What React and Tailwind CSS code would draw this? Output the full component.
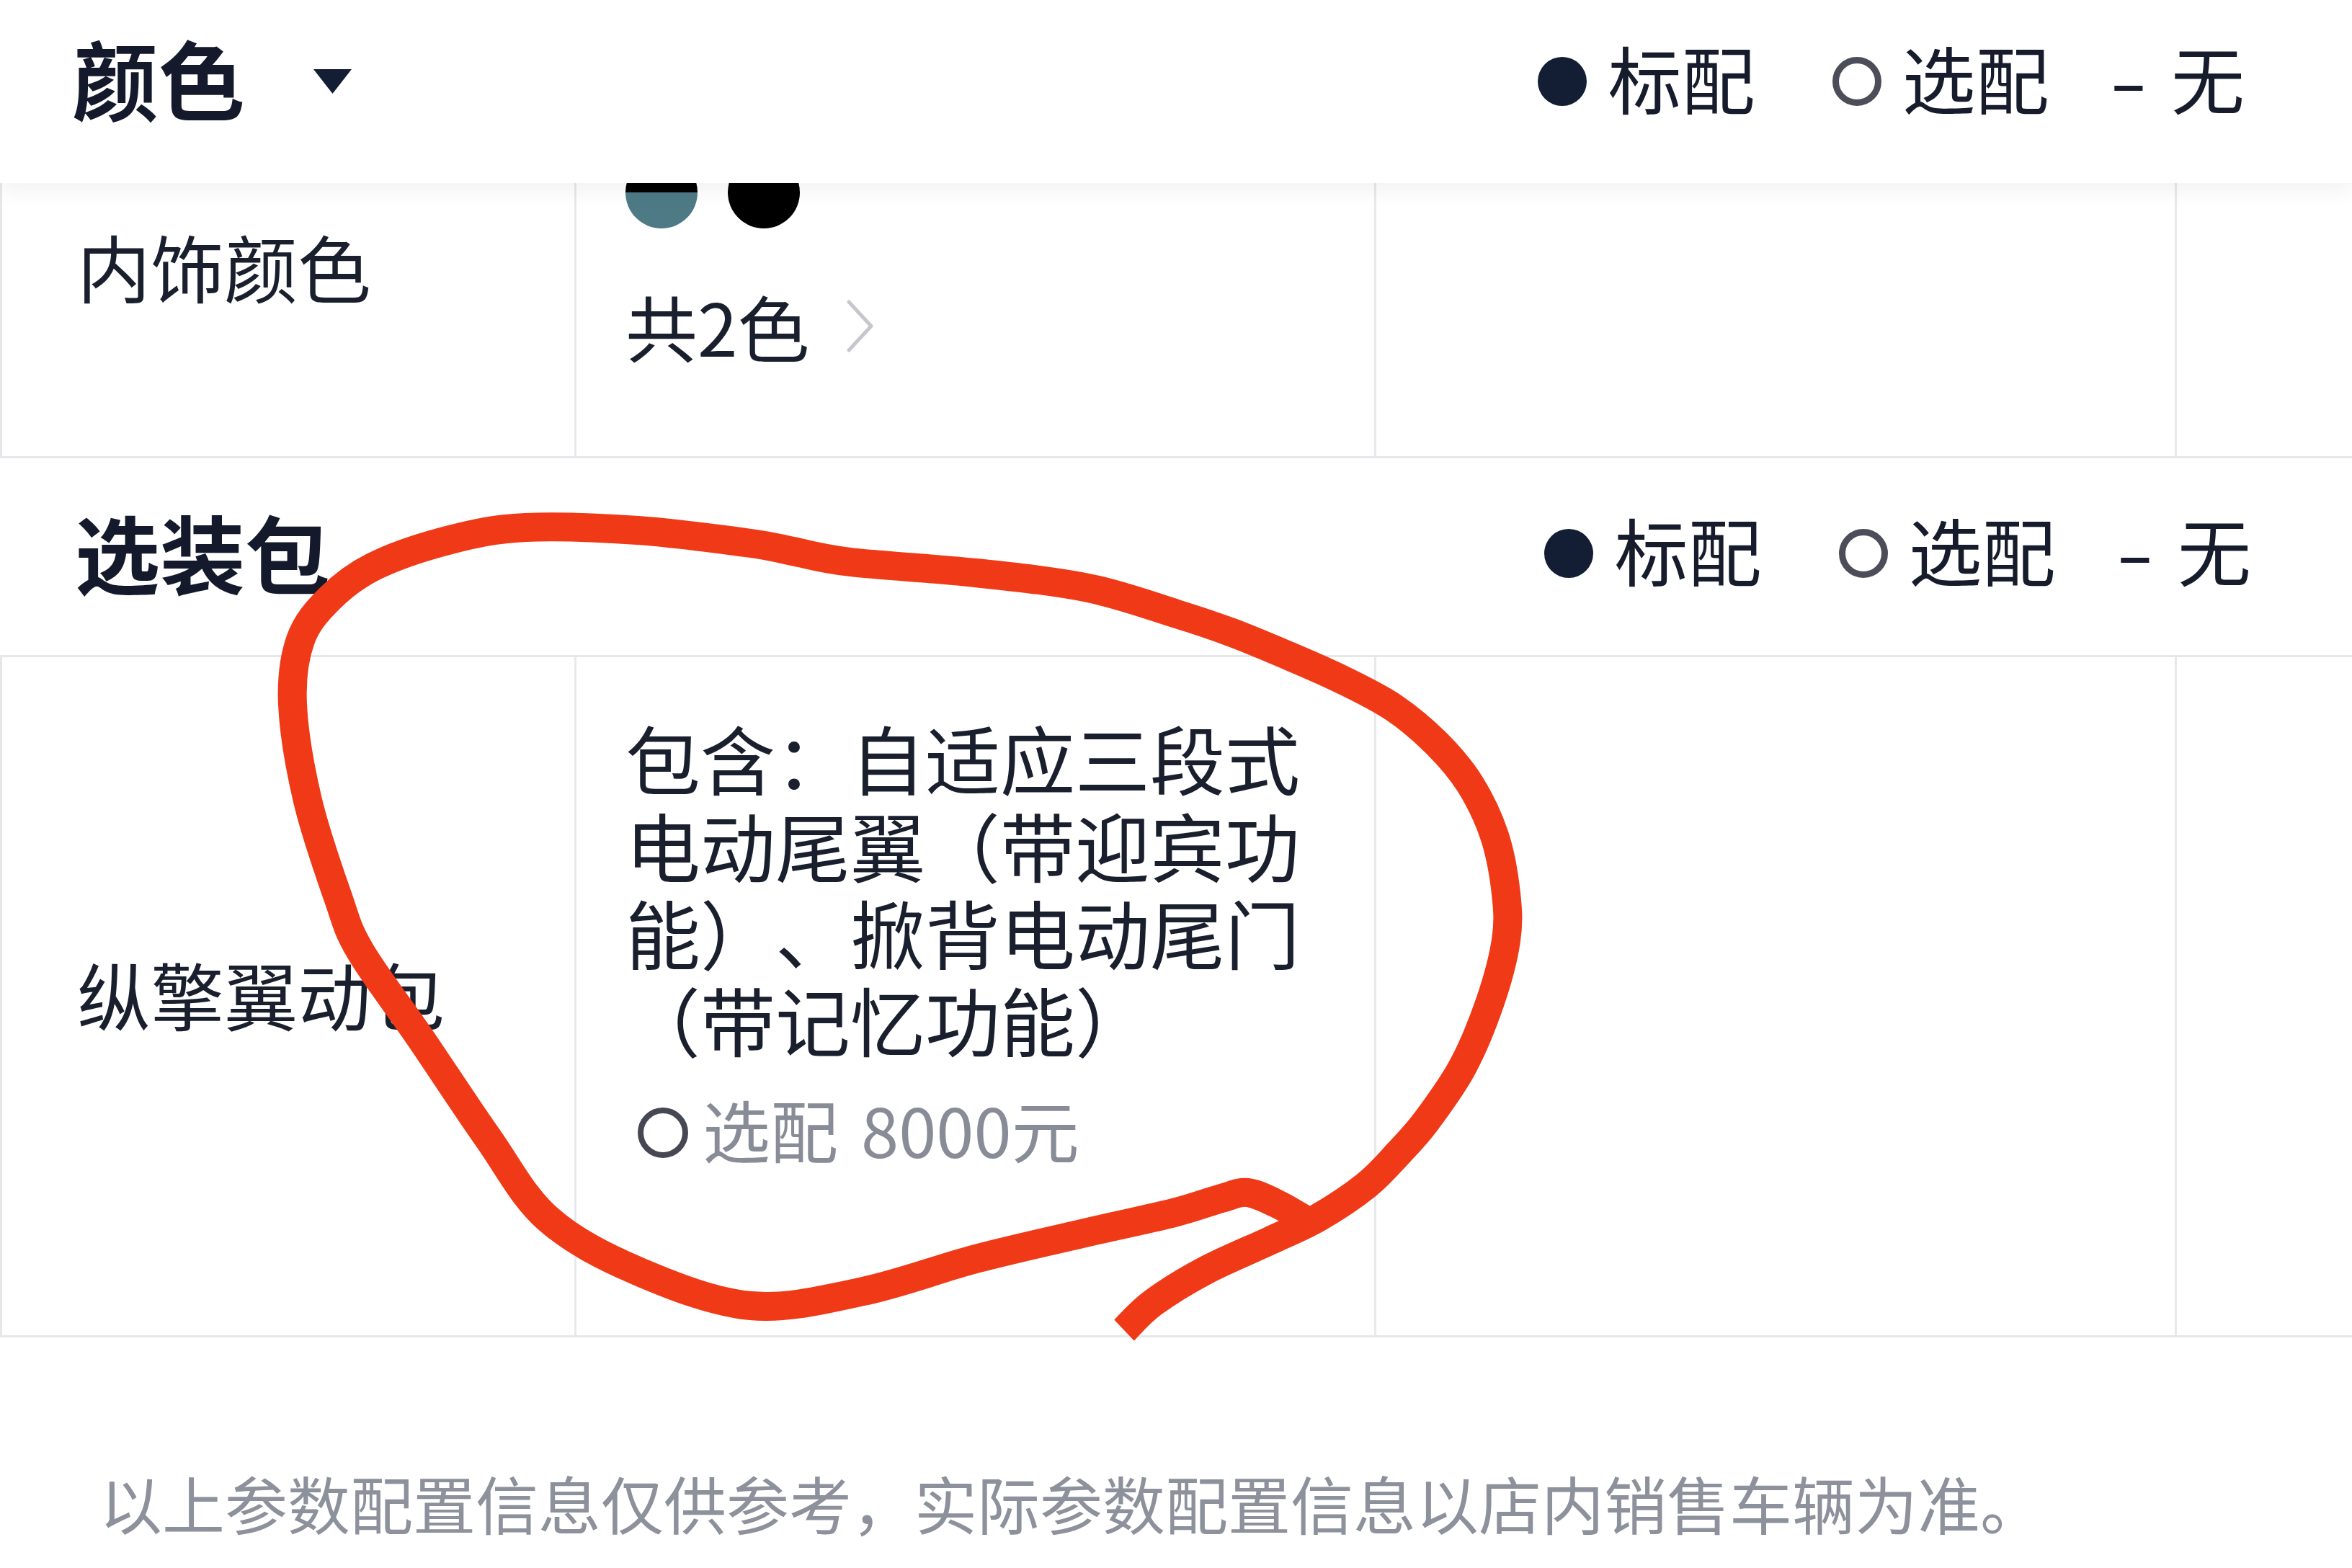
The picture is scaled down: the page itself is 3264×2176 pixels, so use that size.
import React from 'react';

// hand-drawn red loop, centreline points in page pixels
const LOOP = [
  [1560, 1846], [1600, 1808], [1673, 1763], [1762, 1722], [1829, 1690], [1896, 1645],
  [1941, 1600], [1980, 1555], [2030, 1480], [2068, 1390], [2090, 1305], [2090, 1240],
  [2074, 1160], [2040, 1088], [1994, 1032], [1934, 982], [1862, 943], [1788, 910],
  [1710, 878], [1633, 852], [1510, 816], [1354, 795], [1180, 780], [1100, 765],
  [1042, 754], [885, 736], [729, 732], [625, 749], [521, 785], [458, 830], [417, 888],
  [406, 977], [427, 1111], [469, 1245], [500, 1320], [583, 1440], [677, 1579],
  [760, 1691], [885, 1764], [1042, 1812], [1198, 1792], [1354, 1747], [1510, 1710],
  [1629, 1683], [1695, 1663], [1731, 1655], [1771, 1670], [1810, 1692],
];

function smoothPath(pts) {
  let d = `M${pts[0][0]} ${pts[0][1]}`;
  for (let i = 0; i < pts.length - 1; i++) {
    const p0 = pts[i - 1] || pts[i];
    const p1 = pts[i];
    const p2 = pts[i + 1];
    const p3 = pts[i + 2] || p2;
    const c1x = p1[0] + (p2[0] - p0[0]) / 6;
    const c1y = p1[1] + (p2[1] - p0[1]) / 6;
    const c2x = p2[0] - (p3[0] - p1[0]) / 6;
    const c2y = p2[1] - (p3[1] - p1[1]) / 6;
    d += ` C${c1x} ${c1y} ${c2x} ${c2y} ${p2[0]} ${p2[1]}`;
  }
  return d;
}

function Legend({ className = '' }) {
  return (
    <div className={`flex items-center text-[102px] leading-none text-[#161c2c] ${className}`}>
      <span className="w-[68px] h-[68px] rounded-full bg-[#131d33]" />
      <span className="ml-[30px] mb-[12px]">标配</span>
      <span className="ml-[107px] w-[68px] h-[68px] rounded-full border-[9px] border-[#4b4e58]" />
      <span className="ml-[29px] mb-[12px]">选配</span>
      <span className="ml-[92px] mb-[12px] inline-block scale-x-150">-</span>
      <span className="ml-[42px] mb-[12px]">无</span>
    </div>
  );
}

function EmptyCols() {
  return (
    <>
      <div className="w-[1111px] shrink-0 border-l-[3px] border-[#e8e9ec]" />
      <div className="w-[1111px] shrink-0 border-l-[3px] border-[#e8e9ec]" />
    </>
  );
}

export default function App() {
  return (
    <div className="relative w-[3264px] h-[2176px] overflow-hidden bg-white font-['Noto_Sans_CJK_SC','Noto_Sans',sans-serif] text-[#1a1f2e] [text-spacing-trim:space-all]">
      {/* sticky section header */}
      <header className="relative z-10 flex items-center justify-between h-[254px] pb-[28px] pl-[100px] pr-[149px] bg-white shadow-[0_10px_30px_rgba(0,0,0,0.06)]">
        <div className="flex items-center">
          <h2 className="text-[120px] font-bold leading-none text-[#141a2b] mb-[12px]">颜色</h2>
          <svg className="ml-[95px]" width="53" height="34" viewBox="0 0 53 34">
            <path d="M0 0H53L26.5 34Z" fill="#131d33" />
          </svg>
        </div>
        <Legend />
      </header>

      {/* 内饰颜色 row, top part scrolled under the header */}
      <div className="-mt-[140px] flex h-[522px] border-l-[3px] border-b-[3px] border-[#e6e7ea]">
        <div className="w-[794px] shrink-0 flex items-center pl-[104px] pb-[10px] text-[102px] leading-none">
          内饰颜色
        </div>
        <div className="w-[1110px] shrink-0 border-l-[3px] border-[#e8e9ec] pt-[103px] pl-[68px]">
          <div className="flex gap-[42px]">
            <div className="w-[100px] h-[100px] rounded-full overflow-hidden flex flex-col">
              <div className="h-[50px] bg-black" />
              <div className="flex-1 bg-[#4e7a86]" />
            </div>
            <div className="w-[100px] h-[100px] rounded-full bg-black" />
          </div>
          <div className="mt-[75px] flex items-center text-[100px] leading-[120px]">
            <span>共2色</span>
            <svg className="ml-[49px]" width="41" height="75" viewBox="0 0 41 75">
              <path d="M5 4L36 37.5L5 71" fill="none" stroke="#c5c7cd" strokeWidth="5" strokeLinecap="round" strokeLinejoin="round" />
            </svg>
          </div>
        </div>
        <EmptyCols />
      </div>

      {/* 选装包 section header */}
      <div className="flex items-center justify-between h-[276px] pb-[10px] pl-[104px] pr-[140px] border-b-[3px] border-[#e6e7ea]">
        <h2 className="text-[118px] font-semibold leading-none text-[#141a2b] mb-[6px]">选装包</h2>
        <Legend />
      </div>

      {/* 纵擎翼动包 row */}
      <div className="flex h-[944px] border-l-[3px] border-b-[3px] border-[#e6e7ea]">
        <div className="w-[794px] shrink-0 flex items-center pl-[104px] pb-[8px] text-[102px] leading-none">
          纵擎翼动包
        </div>
        <div className="w-[1110px] shrink-0 border-l-[3px] border-[#e8e9ec] pt-[78px] pl-[68px]">
          <div className="text-[104px] leading-[121px] whitespace-nowrap">
            <div>包含：自适应三段式</div>
            <div>电动尾翼（带迎宾功</div>
            <div>能）、掀背电动尾门</div>
            <div>（带记忆功能）</div>
          </div>
          <div className="mt-[36px] flex items-center text-[94px] leading-[113px] text-[#878c97]">
            <span className="ml-[17px] w-[70px] h-[70px] rounded-full border-[8px] border-[#454852]" />
            <span className="ml-[20px] mb-[10px]">选配</span>
            <span className="ml-[32px] mb-[10px]">8000元</span>
          </div>
        </div>
        <EmptyCols />
      </div>

      <p className="mt-[178px] pl-[138px] text-[87px] leading-[103px] text-[#8c919b] whitespace-nowrap">
        以上参数配置信息仅供参考，实际参数配置信息以店内销售车辆为准。
      </p>

      {/* red marker annotation drawn over the page */}
      <svg
        className="absolute inset-0 z-20 pointer-events-none"
        width="3264"
        height="2176"
        viewBox="0 0 3264 2176"
      >
        <path
          d={smoothPath(LOOP)}
          fill="none"
          stroke="#f03a17"
          strokeWidth="40"
          strokeLinecap="butt"
          strokeLinejoin="round"
        />
      </svg>
    </div>
  );
}
